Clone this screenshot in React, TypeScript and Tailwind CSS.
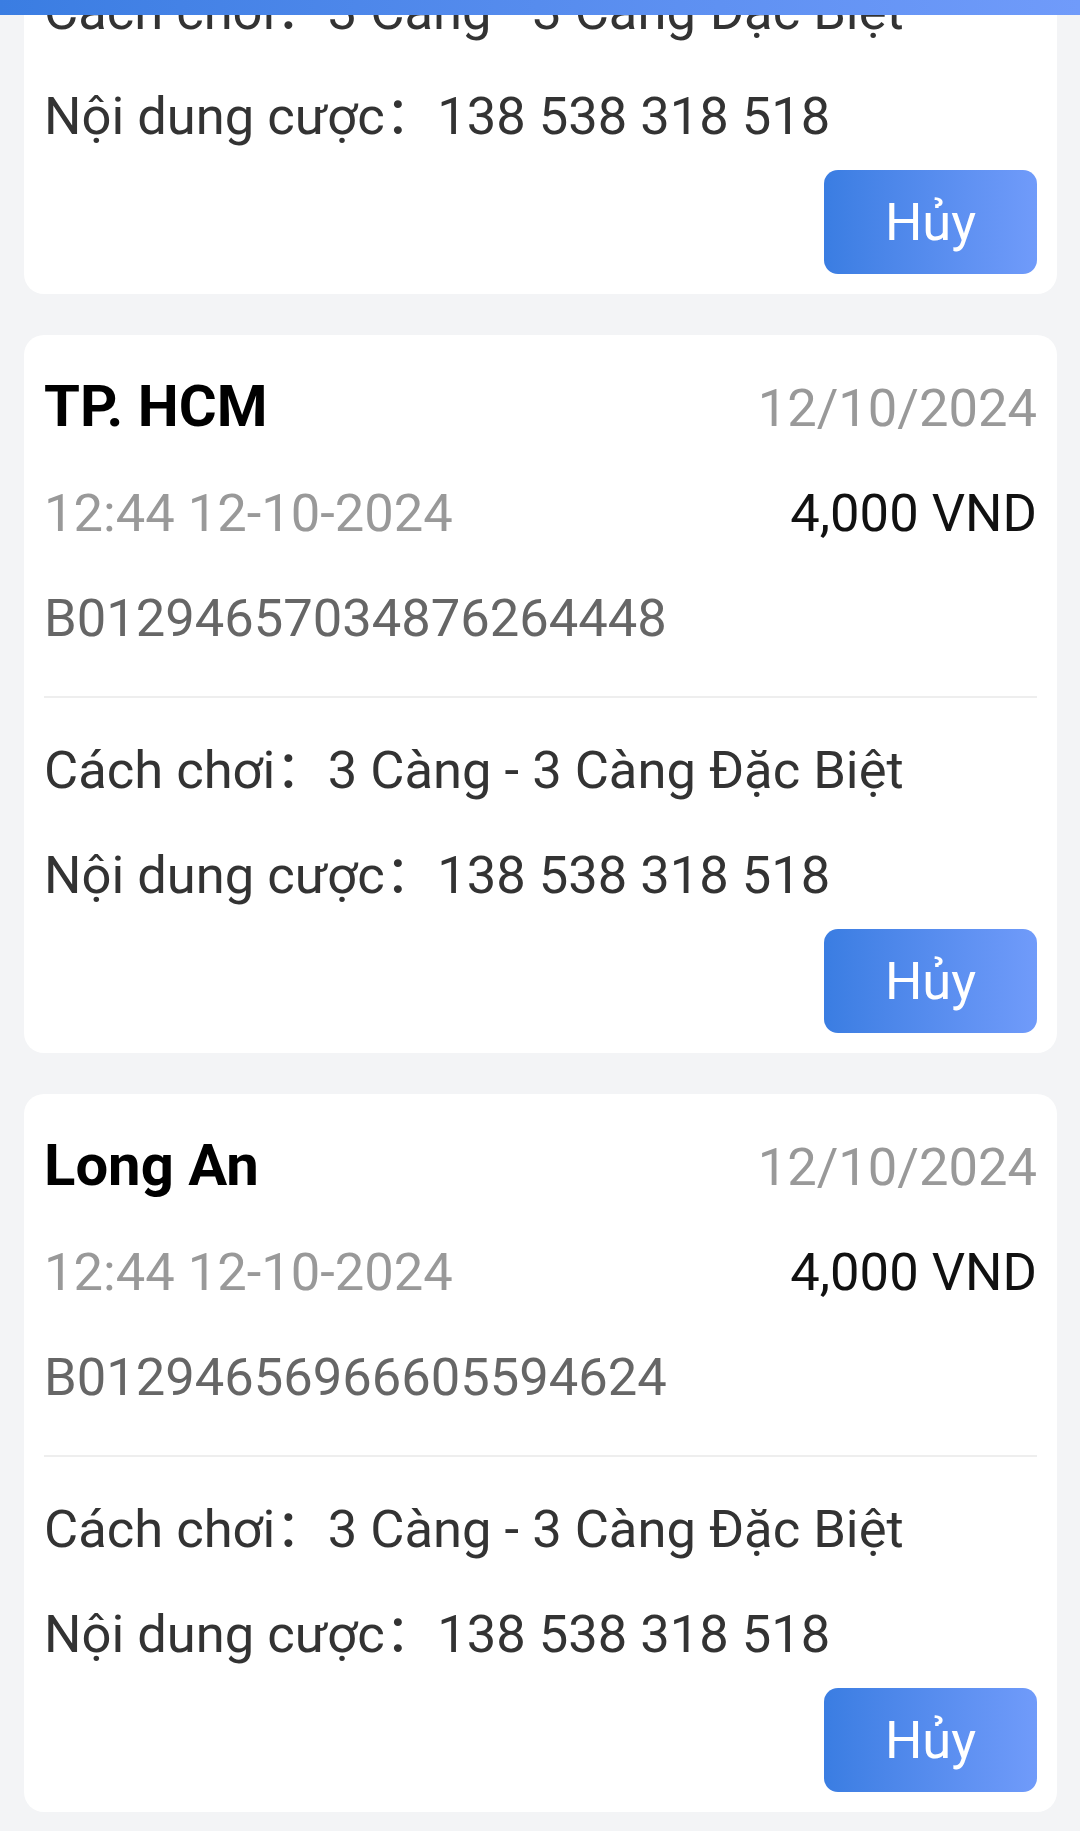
import React from "react";

type Bet = {
  name: string;
  date: string;
  time: string;
  amount: string;
  id: string;
};

const bets: Bet[] = [
  { name: "Bến Tre", date: "12/10/2024", time: "12:44 12-10-2024", amount: "4,000 VND", id: "B01294657112345678901" },
  { name: "TP. HCM", date: "12/10/2024", time: "12:44 12-10-2024", amount: "4,000 VND", id: "B01294657034876264448" },
  { name: "Long An", date: "12/10/2024", time: "12:44 12-10-2024", amount: "4,000 VND", id: "B01294656966605594624" },
];

function Line({ label, value, extra }: { label: string; value: string; extra?: boolean }) {
  return (
    <div className={`${extra ? "mt-[41px]" : "mt-[40px]"} text-[52.5px] leading-[64px] text-[#333333]`}>
      {label}
      <span>：</span>
      {value}
    </div>
  );
}

function Card({ bet }: { bet: Bet }) {
  return (
    <div className="ml-[24px] mr-[23px] h-[718px] shrink-0 rounded-[20px] bg-white px-[20px] pt-[36px] pb-[20px]">
      <div className="flex items-baseline justify-between">
        <span className="text-[58px] leading-[70px] font-bold text-black">{bet.name}</span>
        <span className="text-[52.5px] leading-[64px] text-[#999999]">{bet.date}</span>
      </div>
      <div className="mt-[40px] flex items-baseline justify-between text-[52.5px] leading-[64px]">
        <span className="text-[#999999]">{bet.time}</span>
        <span className="text-[#111111]">{bet.amount}</span>
      </div>
      <div className="mt-[41px] text-[52.5px] leading-[64px] text-[#666666]">{bet.id}</div>
      <div className="mt-[46px] h-[2px] bg-[#eeeeee]" />
      <Line label="Cách chơi" value="3 Càng - 3 Càng Đặc Biệt" />
      <Line label="Nội dung cược" value="138 538 318 518" extra />
      <div className="mt-[22px] flex justify-end">
        <button className="flex h-[104px] w-[213px] items-center justify-center rounded-[14px] bg-gradient-to-r from-[#3a7de2] to-[#709bfa] text-[52.5px] leading-[64px] text-white">
          Hủy
        </button>
      </div>
    </div>
  );
}

export default function App() {
  return (
    <div
      className="relative h-[1831px] w-[1080px] overflow-hidden bg-[#f3f4f6]"
      style={{ fontFamily: 'Roboto, "Noto Sans CJK SC", sans-serif' }}
    >
      <div className="fixed inset-x-0 top-0 z-10 h-[15px] bg-gradient-to-r from-[#3a7de2] to-[#709bfa]" />
      <div className="mt-[-424px] flex flex-col gap-[41px]">
        {bets.map((b, i) => (
          <Card key={i} bet={b} />
        ))}
      </div>
    </div>
  );
}
